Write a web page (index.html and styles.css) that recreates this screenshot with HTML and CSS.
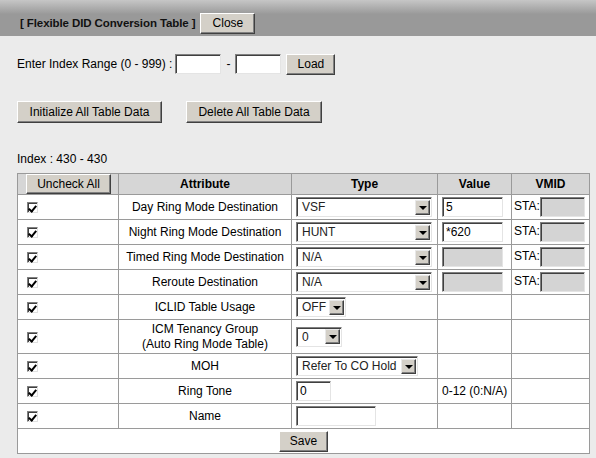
FILE: index.html
```html
<!DOCTYPE html>
<html>
<head>
<meta charset="utf-8">
<link rel="stylesheet" href="styles.css">
</head>
<body>
<div class="topbar">
  <span class="title">[ Flexible DID Conversion Table ]</span>
  <button class="btn btn-close">Close</button>
</div>
<div class="content">
  <div class="range-row">
    <span class="label">Enter Index Range (0 - 999) :</span>
    <input class="field field-range" type="text">
    <span class="dash">-</span>
    <input class="field field-range" type="text">
    <button class="btn btn-load">Load</button>
  </div>
  <div class="action-row">
    <button class="btn btn-init">Initialize All Table Data</button>
    <button class="btn btn-delete">Delete All Table Data</button>
  </div>
  <div class="index-label">Index : 430 - 430</div>
  <table class="grid">
    <colgroup>
      <col class="c1"><col class="c2"><col class="c3"><col class="c4"><col class="c5">
    </colgroup>
    <tr class="head">
      <th class="th-btn"><button class="btn btn-uncheck">Uncheck All</button></th>
      <th>Attribute</th>
      <th>Type</th>
      <th>Value</th>
      <th>VMID</th>
    </tr>
    <tr>
      <td class="chk"><span class="cb"></span></td>
      <td class="attr">Day Ring Mode Destination</td>
      <td class="type"><span class="select sel-wide"><span class="sel-txt">VSF</span><span class="arrow"></span></span></td>
      <td class="val"><input class="field field-val" type="text" value="5"></td>
      <td class="vmid">STA:<span class="field field-sta disabled"></span></td>
    </tr>
    <tr>
      <td class="chk"><span class="cb"></span></td>
      <td class="attr">Night Ring Mode Destination</td>
      <td class="type"><span class="select sel-wide"><span class="sel-txt">HUNT</span><span class="arrow"></span></span></td>
      <td class="val"><input class="field field-val" type="text" value="*620"></td>
      <td class="vmid">STA:<span class="field field-sta disabled"></span></td>
    </tr>
    <tr>
      <td class="chk"><span class="cb"></span></td>
      <td class="attr">Timed Ring Mode Destination</td>
      <td class="type"><span class="select sel-wide"><span class="sel-txt">N/A</span><span class="arrow"></span></span></td>
      <td class="val"><span class="field field-val disabled"></span></td>
      <td class="vmid">STA:<span class="field field-sta disabled"></span></td>
    </tr>
    <tr>
      <td class="chk"><span class="cb"></span></td>
      <td class="attr">Reroute Destination</td>
      <td class="type"><span class="select sel-wide"><span class="sel-txt">N/A</span><span class="arrow"></span></span></td>
      <td class="val"><span class="field field-val disabled"></span></td>
      <td class="vmid">STA:<span class="field field-sta disabled"></span></td>
    </tr>
    <tr>
      <td class="chk"><span class="cb"></span></td>
      <td class="attr">ICLID Table Usage</td>
      <td class="type"><span class="select sel-off"><span class="sel-txt">OFF</span><span class="arrow"></span></span></td>
      <td></td>
      <td></td>
    </tr>
    <tr class="tall">
      <td class="chk"><span class="cb"></span></td>
      <td class="attr">ICM Tenancy Group<br>(Auto Ring Mode Table)</td>
      <td class="type"><span class="select sel-zero"><span class="sel-txt">0</span><span class="arrow"></span></span></td>
      <td></td>
      <td></td>
    </tr>
    <tr>
      <td class="chk"><span class="cb"></span></td>
      <td class="attr">MOH</td>
      <td class="type"><span class="select sel-moh"><span class="sel-txt">Refer To CO Hold</span><span class="arrow"></span></span></td>
      <td></td>
      <td></td>
    </tr>
    <tr>
      <td class="chk"><span class="cb"></span></td>
      <td class="attr">Ring Tone</td>
      <td class="type"><input class="field field-tone" type="text" value="0"></td>
      <td class="val">0-12 (0:N/A)</td>
      <td></td>
    </tr>
    <tr>
      <td class="chk"><span class="cb"></span></td>
      <td class="attr">Name</td>
      <td class="type"><input class="field field-name" type="text"></td>
      <td></td>
      <td></td>
    </tr>
    <tr class="save-row">
      <td colspan="5"><button class="btn btn-save">Save</button></td>
    </tr>
  </table>
</div>
</body>
</html>
```

FILE: styles.css
```css
html, body {
  margin: 0;
  padding: 0;
}
body {
  background: #ebebeb;
  font-family: "Liberation Sans", Arial, sans-serif;
  font-size: 12px;
  color: #000;
  -webkit-font-smoothing: none;
}
.topbar {
  height: 36px;
  box-sizing: border-box;
  padding: 13px 0 0 20px;
  display: flex;
  align-items: flex-start;
  background: linear-gradient(to bottom, #c6c6c6 0px, #a0a0a0 12px, #999999 14px, #999999 100%);
}
.title {
  font-weight: bold;
  font-size: 11.5px;
  letter-spacing: -0.1px;
  line-height: 21px;
  color: #111;
  margin-right: 5px;
}
.btn {
  font-family: "Liberation Sans", Arial, sans-serif;
  font-size: 12px;
  color: #000;
  background: #d4d0c8;
  border: 1px solid;
  border-color: #ffffff #404040 #404040 #ffffff;
  box-shadow: inset -1px -1px 0 #808080;
  height: 21px;
  padding: 0 6px 1px;
  margin: 0;
  box-sizing: border-box;
  cursor: default;
}
.btn-close { width: 55px; }
.content {
  padding: 0 0 0 17px;
}
.range-row {
  display: flex;
  align-items: center;
  margin-top: 18px;
  height: 20px;
}
.label { margin-right: 3px; }
.field {
  box-sizing: border-box;
  height: 20px;
  border: 1px solid;
  border-color: #808080 #e4e4e4 #e4e4e4 #808080;
  box-shadow: inset 1px 1px 0 #404040;
  background: #fff;
  font-family: "Liberation Sans", Arial, sans-serif;
  font-size: 12px;
  padding: 0 0 0 3px;
  margin: 0;
  outline: none;
  display: inline-block;
  vertical-align: middle;
}
.field.disabled { background: #d4d4d4; }
.field-range { width: 46px; }
.dash { margin: 0 5px 0 5px; }
.btn-load { width: 49px; margin-left: 5px; height: 21px; }
.action-row {
  display: flex;
  margin-top: 27px;
  gap: 24px;
}
.btn-init { width: 145px; height: 22px; }
.btn-delete { width: 136px; height: 22px; }
.index-label {
  margin-top: 29px;
  line-height: 14px;
}
.grid {
  margin-top: 7px;
  border-collapse: collapse;
  width: 572px;
  table-layout: fixed;
  background: #fff;
  border: 1px solid #7a7a7a;
}
.c1 { width: 101px; }
.c2 { width: 173px; }
.c3 { width: 146px; }
.c4 { width: 74px; }
.c5 { width: 78px; }
.grid th, .grid td {
  border: 1px solid #9a9a9a;
  padding: 0;
  height: 24px;
  vertical-align: middle;
}
.grid th {
  background: #d6d6d6;
  font-weight: bold;
  text-align: center;
  height: 20px;
}
.grid .th-btn { text-align: left; padding-left: 8px; }
.btn-uncheck { width: 85px; height: 20px; vertical-align: middle; }
.grid td.chk { padding-left: 9px; }
.cb {
  display: inline-block;
  width: 11px;
  height: 11px;
  box-sizing: border-box;
  border: 1px solid;
  border-color: #808080 #e0e0e0 #e0e0e0 #808080;
  box-shadow: inset 1px 1px 0 #404040;
  background: #fff;
  position: relative;
  vertical-align: middle;
}
.cb::after {
  content: "";
  position: absolute;
  left: 2px;
  top: 1px;
  width: 3px;
  height: 6px;
  border: solid #000;
  border-width: 0 2px 2px 0;
  transform: rotate(40deg);
  transform-origin: 50% 50%;
}
.grid td.attr { text-align: center; line-height: 15px; }
.grid tr.tall td { height: 33px; }
.grid td.type { padding-left: 4px; }
.grid td.val { padding-left: 4px; }
.grid td.vmid { padding-left: 2px; }
.select {
  display: inline-flex;
  align-items: center;
  box-sizing: border-box;
  height: 20px;
  border: 1px solid;
  border-color: #808080 #e4e4e4 #e4e4e4 #808080;
  box-shadow: inset 1px 1px 0 #404040;
  background: #fff;
  vertical-align: middle;
  padding: 1px 1px 1px 2px;
}
.sel-txt {
  flex: 1;
  padding-left: 3px;
  color: #222;
  white-space: nowrap;
  overflow: hidden;
}
.arrow {
  width: 15px;
  height: 15px;
  box-sizing: border-box;
  background: #d4d0c8;
  border: 1px solid;
  border-color: #e8e8e8 #404040 #404040 #e8e8e8;
  box-shadow: inset -1px -1px 0 #808080;
  position: relative;
  flex: none;
}
.arrow::after {
  content: "";
  position: absolute;
  left: 3px;
  top: 5px;
  border-left: 4px solid transparent;
  border-right: 4px solid transparent;
  border-top: 4px solid #000;
}
.sel-wide { width: 136px; }
.sel-off { width: 50px; }
.sel-zero { width: 46px; }
.sel-moh { width: 122px; }
.field-val { width: 61px; }
.field-sta { width: 45px; margin-left: 0; }
.field-tone { width: 35px; }
.field-name { width: 80px; }
.save-row td { text-align: center; }
.btn-save { width: 49px; height: 21px; vertical-align: middle; }
```
